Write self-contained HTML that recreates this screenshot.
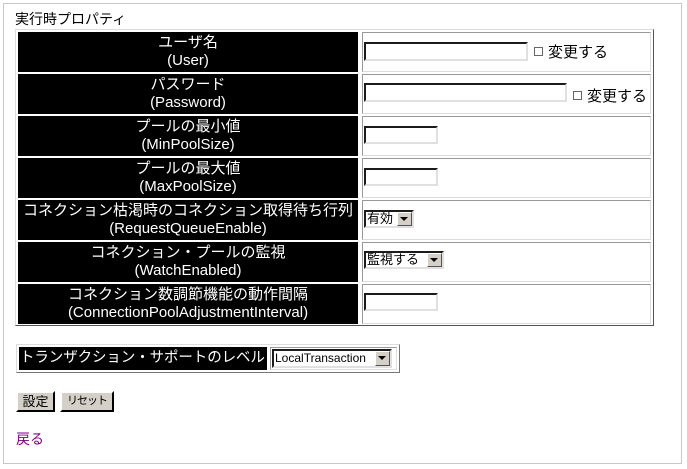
<!DOCTYPE html>
<html><head><meta charset="utf-8"><style>
body{margin:0;width:687px;height:469px;background:#fff;position:relative;overflow:hidden;font-family:"Liberation Sans","Noto Sans CJK JP",sans-serif;font-size:14px;color:#000}
.a{position:absolute;white-space:nowrap}
.frame{left:3px;top:3px;width:679px;height:461px;border:1px solid #c8c8c8;box-sizing:border-box}
.tbl{left:15px;top:29px;width:639px;height:297px;border:1px solid;border-color:#ddd #555 #555 #ddd;box-sizing:border-box}
.bl{background:#000;color:#fff;text-align:center;line-height:18px;font-size:15px;box-sizing:border-box;padding-top:2px}
.rc{border:1px solid;border-color:#999 #ddd #ddd #999;box-sizing:border-box}
.in{border:2px inset #888;border-color:#707070 #e0e0e0 #e0e0e0 #707070;background:#fff;box-sizing:border-box}
.sel{border:2px inset;border-color:#707070 #e0e0e0 #e0e0e0 #707070;background:#fff;box-sizing:border-box;font-size:13px;line-height:14px;padding-left:1px}
.arr{position:absolute;right:0;top:0;width:15px;height:100%;background:#d4d0c8;border:1px solid;border-color:#fff #555 #555 #fff;box-sizing:border-box}
.arr:after{content:"";position:absolute;left:2px;top:4px;border:4px solid transparent;border-top:4px solid #000;border-bottom:0}
.cb{width:9px;height:9px;border:1px solid #666;background:#fff;box-sizing:border-box}
.btn{background:#d4d0c8;border:2px outset;border-color:#fff #555 #555 #fff;box-sizing:border-box;font-size:13px;text-align:center;line-height:17px}
</style></head><body>
<div class="a frame"></div>
<div class="a" style="left:15px;top:9px;">実行時プロパティ</div>
<div class="a tbl"></div>

<div class="a bl" style="left:18px;top:32px;width:340px;height:40px">ユーザ名<br>(User)</div>
<div class="a rc" style="left:362px;top:32px;width:289px;height:40px"></div>
<div class="a in" style="left:364px;top:42px;width:164px;height:19px"></div>
<div class="a cb" style="left:534px;top:47px"></div>
<div class="a" style="left:548px;top:41px;font-size:15px">変更する</div>

<div class="a bl" style="left:18px;top:74px;width:340px;height:40px">パスワード<br>(Password)</div>
<div class="a rc" style="left:362px;top:74px;width:289px;height:40px"></div>
<div class="a in" style="left:364px;top:83px;width:203px;height:19px"></div>
<div class="a cb" style="left:573px;top:91px"></div>
<div class="a" style="left:587px;top:85px;font-size:15px">変更する</div>

<div class="a bl" style="left:18px;top:116px;width:340px;height:40px">プールの最小値<br>(MinPoolSize)</div>
<div class="a rc" style="left:362px;top:116px;width:289px;height:40px"></div>
<div class="a in" style="left:364px;top:126px;width:74px;height:18px"></div>

<div class="a bl" style="left:18px;top:158px;width:340px;height:40px">プールの最大値<br>(MaxPoolSize)</div>
<div class="a rc" style="left:362px;top:158px;width:289px;height:40px"></div>
<div class="a in" style="left:364px;top:168px;width:74px;height:18px"></div>

<div class="a bl" style="left:18px;top:200px;width:340px;height:40px">コネクション枯渇時のコネクション取得待ち行列<br>(RequestQueueEnable)</div>
<div class="a rc" style="left:362px;top:200px;width:289px;height:40px"></div>
<div class="a sel" style="left:364px;top:210px;width:50px;height:18px">有効<span class="arr"></span></div>

<div class="a bl" style="left:18px;top:242px;width:340px;height:40px">コネクション・プールの監視<br>(WatchEnabled)</div>
<div class="a rc" style="left:362px;top:242px;width:289px;height:40px"></div>
<div class="a sel" style="left:364px;top:251px;width:80px;height:18px">監視する<span class="arr"></span></div>

<div class="a bl" style="left:18px;top:284px;width:340px;height:40px">コネクション数調節機能の動作間隔<br>(ConnectionPoolAdjustmentInterval)</div>
<div class="a rc" style="left:362px;top:284px;width:289px;height:40px"></div>
<div class="a in" style="left:364px;top:293px;width:74px;height:18px"></div>

<div class="a" style="left:16px;top:344px;width:384px;height:29px;border:1px solid;border-color:#ddd #777 #777 #ddd;box-sizing:border-box"></div>
<div class="a bl" style="left:19px;top:347px;width:248px;height:23px;padding-top:2px;font-size:14.5px;line-height:19px;text-align:left;padding-left:1px;letter-spacing:-0.1px">トランザクション・サポートのレベル</div>
<div class="a rc" style="left:270px;top:347px;width:127px;height:23px"></div>
<div class="a sel" style="left:272px;top:349px;width:120px;height:19px;font-size:12px;line-height:15px">LocalTransaction<span class="arr"></span></div>

<div class="a btn" style="left:16px;top:391px;width:39px;height:21px">設定</div>
<div class="a btn" style="left:60px;top:391px;width:54px;height:21px;font-size:11px;letter-spacing:-1px">リセット</div>

<div class="a" style="left:16px;top:429px;color:#800080;font-size:14px">戻る</div>
</body></html>
